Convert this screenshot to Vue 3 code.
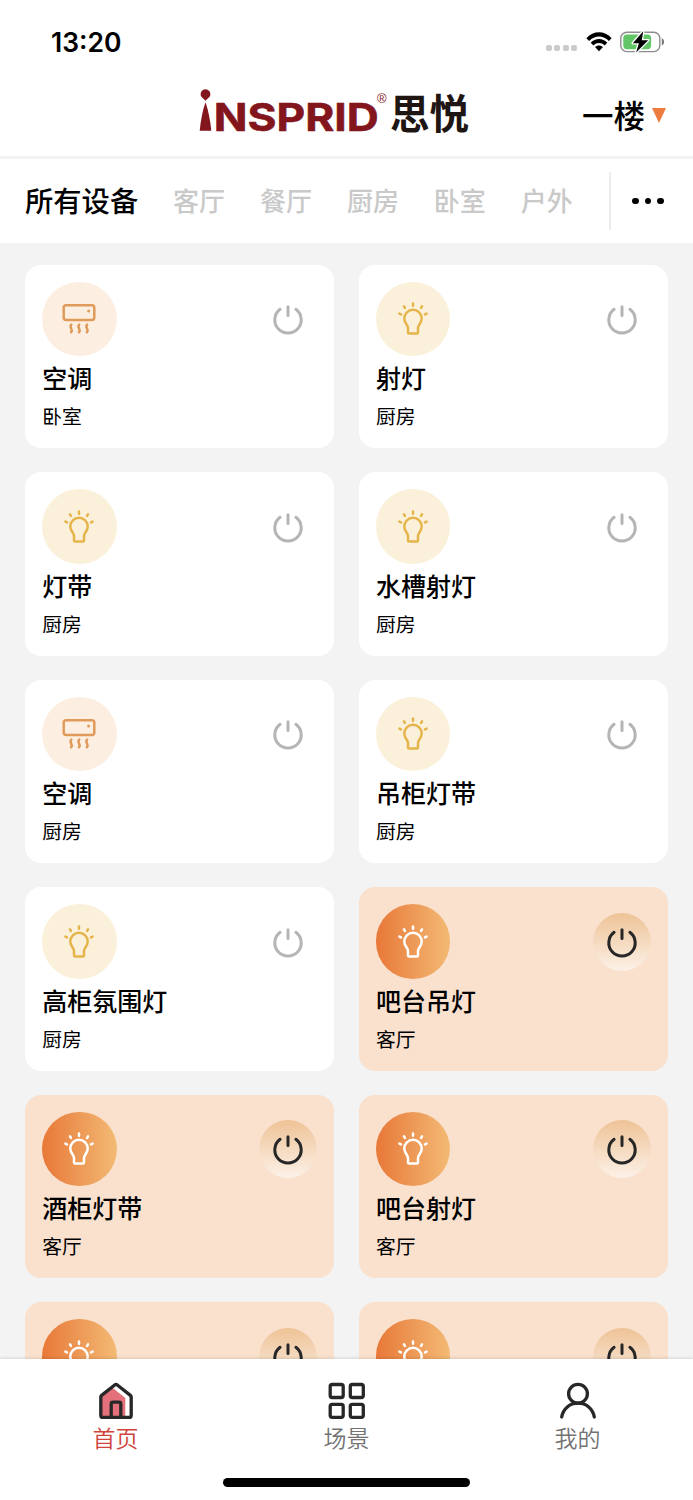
<template>
  <div class="page">
    <!-- status bar -->
    <div class="status-bar">
      <span class="time">13:20</span>
      <div class="status-icons">
        <div class="signal">
          <i v-for="n in 4" :key="n"></i>
        </div>
        <svg class="wifi" width="26" height="20" viewBox="0 0 26 20">
          <path d="M0.4 6.2C7.4-1.6 18.6-1.6 25.6 6.2L22.9 9C17.4 3 8.6 3 3.1 9Z" />
          <path d="M4.7 10.7C9.4 5.8 16.6 5.8 21.3 10.7L18.5 13.5C15.3 10.3 10.7 10.3 7.5 13.5Z" />
          <path d="M9 15.1C11.4 13 14.6 13 17 15.1L13 19.3Z" />
        </svg>
        <svg class="battery" width="45" height="24" viewBox="0 0 45 24">
          <rect x="0.8" y="2.2" width="39" height="19.4" rx="6" fill="none" stroke="#8e8e8e" stroke-width="1.4" />
          <rect x="3.3" y="4.6" width="27.8" height="14.6" rx="3.6" fill="#62c667" />
          <path d="M41.8 8.3c3 1.2 3 6 0 7.2z" fill="#777" />
          <path
            d="M23.2 1.2L12.8 13.2h6.1l-2.800 9.300L28.200 10.200h-6.400z"
            fill="#000"
            stroke="#fff"
            stroke-width="2.6"
            stroke-linejoin="round"
            paint-order="stroke"
          />
        </svg>
      </div>
    </div>

    <!-- header -->
    <header class="header">
      <svg class="logo" width="280" height="68" viewBox="0 -8 280 68">
        <g fill="#83151d">
          <path d="M6.5 1.300a5 5 0 0 1 4.8 6.300c-.6 1.800-2.900 3-4.800 5.200c-1.900-2.200-4.200-3.400-4.800-5.200a5 5 0 0 1 4.800-6.300z" />
          <path d="M6.500 14.200q4.200 12 5.800 28.600H.7q1.600-16.600 5.800-28.600z" />
          <text class="brand" x="14.8" y="42.7" textLength="165" lengthAdjust="spacingAndGlyphs">NSPRID</text>
          <text class="reg" x="178" y="15">®</text>
        </g>
        <text class="brand-cn" x="191" y="41" textLength="79" lengthAdjust="spacingAndGlyphs">思悦</text>
      </svg>
      <div class="floor">
        <span>一楼</span>
        <i class="caret"></i>
      </div>
    </header>

    <!-- room tabs -->
    <nav class="rooms">
      <div class="room-list">
        <span
          v-for="room in rooms"
          :key="room"
          class="room"
          :class="{ active: currentRoom === room }"
          @click="currentRoom = room"
        >{{ room }}</span>
      </div>
      <div class="more">
        <i v-for="n in 3" :key="n"></i>
      </div>
    </nav>

    <!-- devices -->
    <main class="devices">
      <div
        v-for="device in devices"
        :key="device.id"
        class="card"
        :class="[device.type, { on: device.on }]"
      >
        <div class="card-top">
          <div class="device-icon">
            <svg v-if="device.type === 'ac'" width="36" height="32" viewBox="0 0 36 32">
              <rect x="2.7" y="2.2" width="30.6" height="14.8" rx="2.4" />
              <circle class="dot" cx="27.6" cy="8" r="1.5" />
              <path d="M10.300 21.600c-2.800 3.300 2.400 4.300-.2 7.700M18.200 21.600c-2.800 3.300 2.400 4.300-.2 7.700M26.100 21.600c-2.800 3.300 2.400 4.300-.2 7.700" />
            </svg>
            <svg v-else width="36" height="36" viewBox="0 0 36 36">
              <path d="M13 31.4v-4.4c0-3-3.7-4.9-3.7-9.5a8.7 8.7 0 0 1 17.4 0c0 4.6-3.700 6.500-3.700 9.500v4.400q0 1.200-1.200 1.200h-7.600q-1.200 0-1.200-1.200z" />
              <path d="M18 2.4v2.300M9 5.300l.9 1.600M27 5.300l-.9 1.600M4.400 12.600l1.600.8M31.600 12.600l-1.600.8" />
            </svg>
          </div>
          <button class="power" @click="device.on = !device.on">
            <svg width="34" height="34" viewBox="0 0 34 34">
              <path d="M9.100 7.300a13.200 13.200 0 1 0 15.800 0M17 4.800v8.800" />
            </svg>
          </button>
        </div>
        <div class="device-name">{{ device.name }}</div>
        <div class="device-room">{{ device.room }}</div>
      </div>
    </main>

    <!-- bottom navigation -->
    <footer class="tabbar">
      <div class="tabs">
        <div class="tab active">
          <svg width="40" height="40" viewBox="0 0 40 40">
            <path class="fill" d="M16.2 7.500L29.300 18v18H4.800V15.800z" />
            <path d="M4.800 17q0-1 .8-1.600L18.700 5q1.300-1 2.600 0L34.400 15.400q.8.600.8 1.600v18.400q0 2-2 2H6.800q-2 0-2-2z" />
            <path d="M15.200 37V24q0-1.800 1.800-1.800h6q1.800 0 1.800 1.800V37" />
          </svg>
          <span>首页</span>
        </div>
        <div class="tab">
          <svg width="40" height="40" viewBox="0 0 40 40">
            <rect x="3.2" y="4.500" width="13" height="13" rx="2" />
            <rect x="23.300" y="4.500" width="13" height="13" rx="2" />
            <rect x="3.200" y="24.300" width="13" height="13" rx="2" />
            <rect x="23.300" y="24.300" width="13" height="13" rx="2" />
          </svg>
          <span>场景</span>
        </div>
        <div class="tab">
          <svg width="40" height="40" viewBox="0 0 40 40">
            <circle cx="20" cy="13.800" r="9.400" />
            <path d="M3.700 37C5.200 28.500 11.800 23.200 20 23.200S34.800 28.500 36.300 37" />
          </svg>
          <span>我的</span>
        </div>
      </div>
      <div class="home-indicator"></div>
    </footer>
  </div>
</template>

<script setup>
import { ref } from 'vue';

const rooms = ['所有设备', '客厅', '餐厅', '厨房', '卧室', '户外'];
const currentRoom = ref('所有设备');

const devices = ref([
  { id: 1, type: 'ac', name: '空调', room: '卧室', on: false },
  { id: 2, type: 'light', name: '射灯', room: '厨房', on: false },
  { id: 3, type: 'light', name: '灯带', room: '厨房', on: false },
  { id: 4, type: 'light', name: '水槽射灯', room: '厨房', on: false },
  { id: 5, type: 'ac', name: '空调', room: '厨房', on: false },
  { id: 6, type: 'light', name: '吊柜灯带', room: '厨房', on: false },
  { id: 7, type: 'light', name: '高柜氛围灯', room: '厨房', on: false },
  { id: 8, type: 'light', name: '吧台吊灯', room: '客厅', on: true },
  { id: 9, type: 'light', name: '酒柜灯带', room: '客厅', on: true },
  { id: 10, type: 'light', name: '吧台射灯', room: '客厅', on: true },
  { id: 11, type: 'light', name: '', room: '', on: true },
  { id: 12, type: 'light', name: '', room: '', on: true }
]);
</script>

<style>
body {
  margin: 0;
}
</style>

<style scoped>
.page {
  display: flex;
  flex-direction: column;
  height: 1500px;
  overflow: hidden;
  background: #f3f3f3;
  color: #000;
  font-family: Inter, "Noto Sans CJK SC", sans-serif;
}

.page svg {
  display: block;
  flex-shrink: 0;
}

.status-bar {
  display: flex;
  justify-content: space-between;
  align-items: center;
  height: 84px;
  padding: 0 28px 0 51px;
  box-sizing: border-box;
  background: #fff;
  flex-shrink: 0;
}

.time {
  font-size: 26.5px;
  font-weight: 600;
  line-height: 84px;
}

.status-icons {
  display: flex;
  align-items: center;
}

.signal {
  display: flex;
  gap: 2.5px;
  margin: 12px 9px 0 0;
}

.signal i {
  width: 6px;
  height: 6px;
  border-radius: 2px;
  background: #cbcbcb;
}

.wifi {
  margin-right: 8px;
}

.header {
  display: flex;
  justify-content: space-between;
  height: 72px;
  padding: 0 27px 0 199px;
  background: #fff;
  border-bottom: 3px solid #f3f3f3;
  flex-shrink: 0;
}

.logo {
  margin-top: -4px;
  overflow: visible;
}

.brand {
  font: 700 38.5px Inter, sans-serif;
  stroke: #83151d;
  stroke-width: 0.6;
}

.reg {
  font: 400 13px "Liberation Sans", sans-serif;
}

.brand-cn {
  font: 700 41px "Noto Sans CJK SC", sans-serif;
  fill: #1f1614;
}

.floor {
  display: flex;
  align-items: center;
  height: 60px;
  font-size: 31.5px;
  font-weight: 500;
}

.caret {
  margin: 3px 0 0 6px;
  border: 7.5px solid transparent;
  border-top: 15px solid #ee7b40;
  border-bottom: 0;
}

.floor span {
  margin-right: 1px;
}

.rooms {
  display: flex;
  align-items: center;
  justify-content: space-between;
  height: 84px;
  background: #fff;
  flex-shrink: 0;
}

.room-list {
  display: flex;
  align-items: center;
  gap: 34.9px;
  padding: 2px 0 0 25px;
}

.room {
  font-size: 26px;
  font-weight: 500;
  line-height: 40px;
  color: #c9c9c9;
  white-space: nowrap;
  cursor: pointer;
}

.room.active {
  font-size: 28.3px;
  color: #000;
}

.more {
  display: flex;
  align-items: center;
  gap: 6px;
  height: 58px;
  padding: 0 29.5px 0 21px;
  border-left: 2px solid #ececec;
}

.more i {
  width: 6.5px;
  height: 6.5px;
  border-radius: 50%;
  background: #000;
}

.devices {
  flex: 1;
  min-height: 0;
  overflow: hidden;
  display: grid;
  grid-template-columns: 1fr 1fr;
  grid-auto-rows: 183.5px;
  gap: 24px 25.3px;
  padding: 21.8px 25.5px 0 25.2px;
}

.card {
  padding: 17px;
  border-radius: 16px;
  background: #fff;
  box-sizing: border-box;
}

.card.on {
  background: #f9e1ce;
}

.card-top {
  display: flex;
  align-items: center;
  justify-content: space-between;
}

.device-icon {
  display: flex;
  align-items: center;
  justify-content: center;
  width: 74.5px;
  height: 74.5px;
  border-radius: 50%;
  background: #fbf1da;
}

.device-icon svg {
  fill: none;
  stroke: #e5b54c;
  stroke-width: 2.5;
  stroke-linecap: round;
  stroke-linejoin: round;
}

.ac .device-icon {
  background: #fcefe2;
}

.ac .device-icon svg {
  stroke: #e09b5a;
}

.ac .device-icon .dot {
  fill: #e09b5a;
  stroke: none;
}

.on .device-icon {
  background: linear-gradient(90deg, #e87838, #f3ba75);
}

.on .device-icon svg {
  stroke: #fff;
}

.power {
  display: flex;
  align-items: center;
  justify-content: center;
  width: 58px;
  height: 58px;
  padding: 0;
  border: 0;
  border-radius: 50%;
  background: none;
  cursor: pointer;
}

.power svg {
  fill: none;
  stroke: #b5b5b5;
  stroke-width: 3;
  stroke-linecap: round;
}

.on .power {
  background: linear-gradient(180deg, #eec397, #fcf1e7);
}

.on .power svg {
  stroke: #272727;
}

.device-name {
  margin-top: 4px;
  font-size: 25px;
  font-weight: 500;
  line-height: 38px;
}

.device-room {
  margin-top: 3px;
  font-size: 19.8px;
  line-height: 32px;
}

.tabbar {
  position: relative;
  height: 141px;
  background: #fff;
  box-shadow: 0 -1px 3px rgba(0, 0, 0, 0.12);
  flex-shrink: 0;
}

.tabs {
  display: flex;
  padding-top: 21px;
}

.tab {
  flex: 1;
  display: flex;
  flex-direction: column;
  align-items: center;
  font-size: 23px;
  font-weight: 350;
  line-height: 39px;
  color: #737373;
}

.tab.active {
  color: #d1433c;
}

.tab svg {
  fill: none;
  stroke: #272727;
  stroke-width: 3.3;
  stroke-linecap: round;
  stroke-linejoin: round;
}

.tab svg .fill {
  fill: #e3707a;
  stroke: none;
}

.home-indicator {
  width: 247px;
  height: 8.5px;
  margin: 19px auto 0;
  border-radius: 5px;
  background: #000;
}
</style>
